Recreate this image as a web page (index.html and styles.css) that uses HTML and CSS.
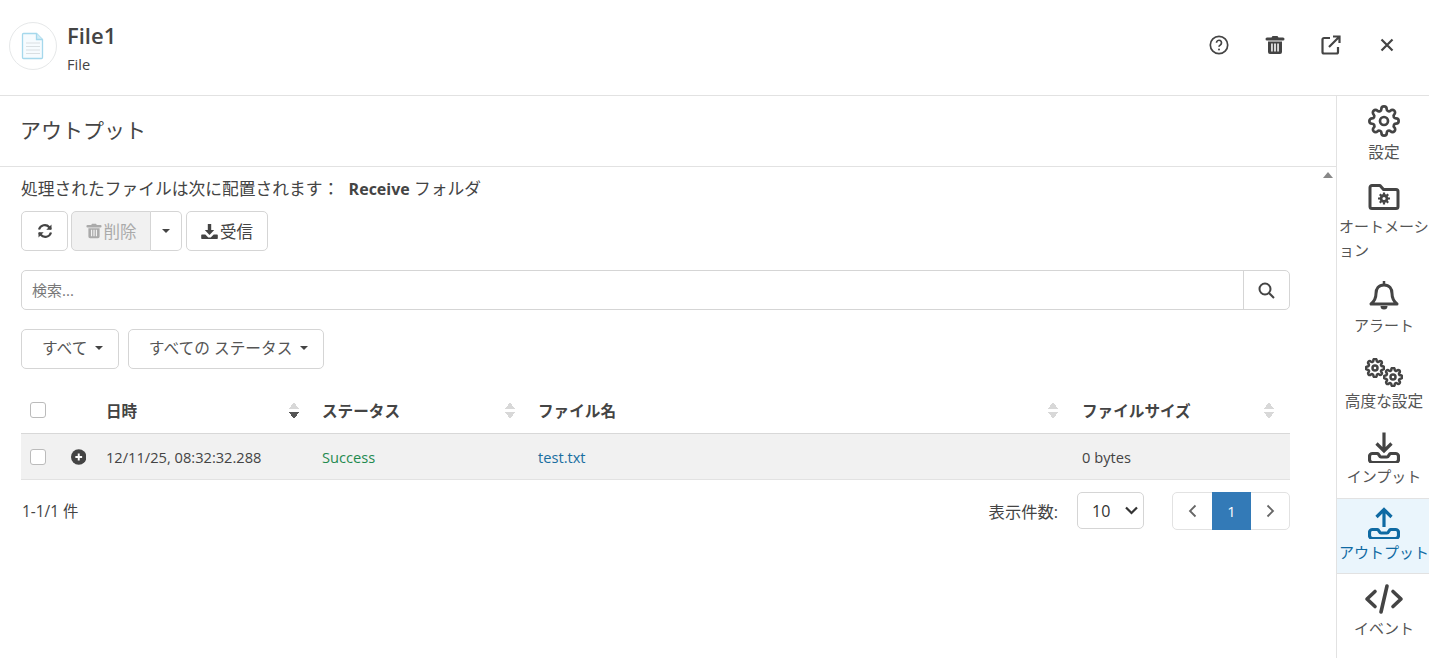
FILE: index.html
```html
<!DOCTYPE html>
<html lang="ja">
<head>
  <meta charset="UTF-8" />
  <title>File1</title>
  <link rel="stylesheet" href="styles.css">
</head>
<body>
<svg class="sprite" xmlns="http://www.w3.org/2000/svg">
  <symbol id="i-gear" viewBox="0 0 24 24">
    <circle cx="12" cy="12" r="3"/>
    <path d="M19.4 15a1.65 1.65 0 0 0 .33 1.82l.06.06a2 2 0 0 1 0 2.83 2 2 0 0 1-2.83 0l-.06-.06a1.65 1.65 0 0 0-1.82-.33 1.65 1.65 0 0 0-1 1.51V21a2 2 0 0 1-2 2 2 2 0 0 1-2-2v-.09A1.65 1.65 0 0 0 9 19.4a1.65 1.65 0 0 0-1.82.33l-.06.06a2 2 0 0 1-2.83 0 2 2 0 0 1 0-2.83l.06-.06a1.65 1.65 0 0 0 .33-1.82 1.65 1.65 0 0 0-1.51-1H3a2 2 0 0 1-2-2 2 2 0 0 1 2-2h.09A1.65 1.65 0 0 0 4.6 9a1.65 1.65 0 0 0-.33-1.82l-.06-.06a2 2 0 0 1 0-2.83 2 2 0 0 1 2.83 0l.06.06a1.65 1.65 0 0 0 1.82.33H9a1.65 1.65 0 0 0 1-1.51V3a2 2 0 0 1 2-2 2 2 0 0 1 2 2v.09a1.65 1.65 0 0 0 1 1.51 1.65 1.65 0 0 0 1.82-.33l.06-.06a2 2 0 0 1 2.83 0 2 2 0 0 1 0 2.83l-.06.06a1.65 1.65 0 0 0-.33 1.82V9a1.65 1.65 0 0 0 1.51 1H21a2 2 0 0 1 2 2 2 2 0 0 1-2 2h-.09a1.65 1.65 0 0 0-1.51 1z"/>
  </symbol>
  <symbol id="i-trash" viewBox="0 0 20 20">
    <path fill="currentColor" stroke="none" d="M7.5 1h5l1 1.5H18a1 1 0 0 1 0 3H2a1 1 0 0 1 0-3h4.500zM3 6.500h14V17a2 2 0 0 1-2 2H5a2 2 0 0 1-2-2zm3.200 2v8h1.500v-8zm3 0v8h1.600v-8zm3.100 0v8h1.500v-8z" fill-rule="evenodd"/>
  </symbol>
  <symbol id="i-tray" viewBox="0 0 32 32">
    <path d="M9.500 22.500H4.500A3 3 0 0 0 1.500 25.500v3A3 3 0 0 0 4.500 31.500h23a3 3 0 0 0 3-3v-3a3 3 0 0 0-3-3h-5c-1.500 0-1.500 3.500-3.500 3.500h-6c-2 0-2-3.500-3.500-3.500z" stroke-linejoin="round"/>
  </symbol>
</svg>

<header class="topbar">
  <div class="file-logo">
    <svg width="26" height="28" viewBox="0 0 26 28" fill="none">
      <path d="M3.500 1.500h13l6 6v18a1 1 0 0 1-1 1h-18a1 1 0 0 1-1-1v-23a1 1 0 0 1 1-1z" fill="#f6fbfe" stroke="#a5d8ec" stroke-width="1.300"/>
      <path d="M16.500 1.500v6h6" fill="#d3ecf6" stroke="#a5d8ec" stroke-width="1.300"/>
      <path d="M6 11h14M6 14.500h14M6 18h14M6 21.500h14" stroke="#d9dfe2" stroke-width="1.200"/>
    </svg>
  </div>
  <div class="file-title">
    <div class="file-name">File1</div>
    <div class="file-type">File</div>
  </div>
  <div class="top-actions">
    <svg class="top-icon" width="20" height="20" viewBox="0 0 20 20" fill="none" stroke="currentColor">
      <circle cx="10" cy="10" r="8.700" stroke-width="1.700"/>
      <path d="M7.500 7.800a2.500 2.500 0 1 1 3.800 2.100c-.9.500-1.300 1-1.300 1.900" stroke-width="1.700"/>
      <circle cx="10" cy="14.500" r="1" fill="currentColor" stroke="none"/>
    </svg>
    <svg class="top-icon" width="20" height="20"><use href="#i-trash"/></svg>
    <svg class="top-icon" width="20" height="20" viewBox="0 0 20 20" fill="none" stroke="currentColor" stroke-width="2.200">
      <path d="M9 3H3a1.500 1.500 0 0 0-1.500 1.500V17A1.500 1.500 0 0 0 3 18.500h12.500A1.500 1.500 0 0 0 17 17v-5"/>
      <path d="M8 12L18 2M12 1.500h6.500V8"/>
    </svg>
    <svg class="top-icon" width="20" height="20" viewBox="0 0 20 20" fill="none" stroke="currentColor" stroke-width="2.200">
      <path d="M4.500 4.500l11 11M15.500 4.500l-11 11"/>
    </svg>
  </div>
</header>

<div class="layout">
  <main class="main">
    <h1 class="page-title">アウトプット</h1>
    <div class="scroll-up"></div>
    <div class="content">
      <p class="location">処理されたファイルは次に配置されます： <b>Receive</b> フォルダ</p>

      <div class="toolbar">
        <button class="btn btn-refresh">
          <svg width="16" height="16" viewBox="0 0 16 16" fill="none" stroke="currentColor" stroke-width="2.200">
            <path d="M2 6.500a6 6 0 0 1 10.300-2.300L14 6M14 9.500a6 6 0 0 1-10.300 2.300L2 10"/>
            <path d="M14.500 1.500v5.200H9.300M1.500 14.500V9.300h5.200" stroke="none" fill="currentColor"/>
          </svg>
        </button>
        <div class="btn-group">
          <button class="btn btn-delete">
            <svg width="16" height="16"><use href="#i-trash"/></svg>削除
          </button>
          <button class="btn btn-split"><span class="caret"></span></button>
        </div>
        <button class="btn btn-receive">
          <svg width="17" height="16" viewBox="0 0 17 16" fill="currentColor">
            <path d="M6.800 1h3.400v6h3l-4.700 5-4.700-5h3z"/>
            <path d="M1 11.500h3.300l3 3h2.400l3-3H16a.8.800 0 0 1 .8.800v2.900a.8.800 0 0 1-.8.800H1a.8.800 0 0 1-.8-.8v-2.900a.8.800 0 0 1 .8-.8z"/>
          </svg>受信
        </button>
      </div>

      <div class="search">
        <input class="search-input" type="text" placeholder="検索...">
        <button class="search-btn">
          <svg width="17" height="17" viewBox="0 0 17 17" fill="none" stroke="currentColor" stroke-width="2">
            <circle cx="7" cy="7" r="5.500"/><path d="M11 11l5 5"/>
          </svg>
        </button>
      </div>

      <div class="filters">
        <button class="btn btn-filter">すべて<span class="caret"></span></button>
        <button class="btn btn-filter">すべての ステータス<span class="caret"></span></button>
      </div>

      <table class="grid">
        <colgroup>
          <col class="c-check"><col class="c-date"><col class="c-status"><col class="c-name"><col class="c-size">
        </colgroup>
        <thead>
          <tr>
            <th><span class="check"></span></th>
            <th><div class="th-in">日時<span class="sort sort-desc"></span></div></th>
            <th><div class="th-in">ステータス<span class="sort"></span></div></th>
            <th><div class="th-in">ファイル名<span class="sort"></span></div></th>
            <th><div class="th-in">ファイルサイズ<span class="sort"></span></div></th>
          </tr>
        </thead>
        <tbody>
          <tr>
            <td>
              <div class="row-tools">
                <span class="check"></span>
                <svg width="16" height="16" viewBox="0 0 16 16">
                  <circle cx="8" cy="8" r="8" fill="#444"/>
                  <path d="M8 4.500v7M4.500 8h7" stroke="#fff" stroke-width="2"/>
                </svg>
              </div>
            </td>
            <td>12/11/25, 08:32:32.288</td>
            <td class="ok">Success</td>
            <td><a class="file-link" href="#">test.txt</a></td>
            <td>0 bytes</td>
          </tr>
        </tbody>
      </table>

      <div class="pager-row">
        <span class="count">1-1/1 件</span>
        <div class="pager-right">
          <span class="per-page">表示件数:</span>
          <div class="select">10
            <svg width="13" height="9" viewBox="0 0 13 9" fill="none" stroke="currentColor" stroke-width="2.200"><path d="M1 1.500L6.500 7 12 1.500"/></svg>
          </div>
          <div class="pager">
            <span class="page">
              <svg width="9" height="14" viewBox="0 0 9 14" fill="none" stroke="currentColor" stroke-width="1.800"><path d="M7.500 1.500L2 7l5.500 5.500"/></svg>
            </span>
            <span class="page page-on">1</span>
            <span class="page page-last">
              <svg width="9" height="14" viewBox="0 0 9 14" fill="none" stroke="currentColor" stroke-width="1.800"><path d="M1.500 1.500L7 7l-5.500 5.500"/></svg>
            </span>
          </div>
        </div>
      </div>
    </div>
  </main>

  <nav class="side">
    <a class="side-item side-first">
      <svg width="32" height="32" fill="none" stroke="currentColor" stroke-width="2"><use href="#i-gear"/></svg>
      <span class="side-kanji">設定</span>
    </a>
    <a class="side-item">
      <svg width="32" height="32" viewBox="0 0 32 32" fill="none" stroke="currentColor" stroke-width="3">
        <path d="M2 6.500a2 2 0 0 1 2-2h8l3.500 4H28a2 2 0 0 1 2 2v15a2 2 0 0 1-2 2H4a2 2 0 0 1-2-2z" stroke-linejoin="round"/>
        <circle cx="16" cy="17.500" r="3" stroke-width="2.800"/>
        <path d="M16 11.500v12M10 17.500h12M11.800 13.300l8.400 8.400M20.200 13.300l-8.400 8.400" stroke-width="2.200" stroke-dasharray="2.200 7.600"/>
      </svg>
      <span>オートメーション</span>
    </a>
    <a class="side-item">
      <svg width="32" height="32" viewBox="0 0 32 32" fill="none" stroke="currentColor" stroke-width="3">
        <path d="M16 5c-5.500 0-8 4-8 8.500 0 5.500-2 8-5 10.500h26c-3-2.500-5-5-5-10.500C24 9 21.500 5 16 5z" stroke-linejoin="round"/>
        <path d="M16 1v4" stroke-width="2.500"/>
        <path d="M12.500 26h7a3.500 3.500 0 0 1-7 0z" fill="currentColor" stroke="none"/>
      </svg>
      <span>アラート</span>
    </a>
    <a class="side-item">
      <svg width="38" height="32" viewBox="0 0 38 32" fill="none" stroke="currentColor">
        <svg x="0" y="2" width="20" height="20" viewBox="0 0 24 24" stroke-width="3"><use href="#i-gear"/></svg>
        <svg x="18" y="11" width="20" height="20" viewBox="0 0 24 24" stroke-width="3"><use href="#i-gear"/></svg>
      </svg>
      <span class="side-kanji">高度な設定</span>
    </a>
    <a class="side-item">
      <svg width="32" height="32" viewBox="0 0 32 32" fill="none" stroke="currentColor" stroke-width="3.200">
        <path d="M16 1.500v18M8.500 12.500L16 20l7.500-7.500"/>
        <use href="#i-tray"/>
      </svg>
      <span>インプット</span>
    </a>
    <a class="side-item side-on">
      <svg width="32" height="32" viewBox="0 0 32 32" fill="none" stroke="currentColor" stroke-width="3.200">
        <path d="M16 20V3M8.500 10L16 2.500l7.500 7.500"/>
        <use href="#i-tray"/>
      </svg>
      <span>アウトプット</span>
    </a>
    <a class="side-item">
      <svg width="40" height="32" viewBox="0 0 40 32" fill="none" stroke="currentColor" stroke-width="3.600">
        <path d="M11 8.500L3 16l8 7.500M29 8.500l8 7.500-8 7.500M23 3l-6 26" stroke-linecap="round" stroke-linejoin="round"/>
      </svg>
      <span>イベント</span>
    </a>
  </nav>
</div>
</body>
</html>
```

FILE: styles.css
```css
html, body {
  margin: 0;
  padding: 0;
  background: #fff;
  color: #444;
  font-family: "Open Sans", "Noto Sans CJK JP", sans-serif;
  font-size: 14.65px;
  overflow: hidden;
}

.sprite {
  display: none;
}

.topbar {
  height: 95px;
  border-bottom: 1px solid #e2e2e2;
  display: flex;
  align-items: flex-start;
  padding-left: 9px;
}

.file-logo {
  width: 46px;
  height: 46px;
  margin-top: 22px;
  border: 1px solid #e6e8e9;
  border-radius: 50%;
  display: flex;
  align-items: center;
  justify-content: center;
}

.file-title {
  margin-left: 10px;
  margin-top: 20px;
}

.file-name {
  font-size: 22px;
  font-weight: 600;
  line-height: 30px;
}

.file-type {
  font-size: 14.65px;
  line-height: 20px;
  margin-top: 4px;
}

.top-actions {
  margin-left: auto;
  margin-top: 35px;
  display: flex;
  gap: 36px;
  padding-right: 32.5px;
}

.top-icon {
  display: block;
}

.layout {
  display: flex;
  height: 562px;
}

.main {
  flex: 1;
  position: relative;
  min-width: 0;
}

.page-title {
  margin: 0;
  height: 70px;
  line-height: 68px;
  padding-left: 20px;
  font-size: 21px;
  font-weight: 400;
  border-bottom: 1px solid #e2e2e2;
}

.scroll-up {
  position: absolute;
  top: 76px;
  right: 3px;
  border-left: 5px solid transparent;
  border-right: 5px solid transparent;
  border-bottom: 6px solid #888;
}

.content {
  padding: 0 46px 0 21px;
}

.location {
  margin: 0;
  height: 44px;
  line-height: 44px;
  font-size: 16.75px;
  white-space: pre-wrap;
}

.location b {
  font-weight: 700;
  margin-left: 5px;
  font-size: 16px;
}

.toolbar {
  display: flex;
  gap: 3px;
}

.btn {
  height: 40px;
  padding: 0;
  background: #fff;
  border: 1px solid #d5d5d5;
  border-radius: 5px;
  color: #444;
  font: inherit;
  font-size: 16.5px;
  display: flex;
  align-items: center;
  justify-content: center;
}

.btn-refresh {
  width: 47px;
}

.btn-group {
  display: flex;
}

.btn-delete {
  width: 80px;
  background: #f1f1f1;
  color: #aaa;
  border-radius: 5px 0 0 5px;
  gap: 2px;
}

.btn-split {
  width: 31px;
  border-left: 0;
  border-radius: 0 5px 5px 0;
}

.btn-receive {
  width: 82px;
  margin-left: 1px;
  gap: 2px;
}

.caret {
  display: inline-block;
  border-left: 4px solid transparent;
  border-right: 4px solid transparent;
  border-top: 4px solid #444;
}

.search {
  margin-top: 19px;
  height: 40px;
  display: flex;
  border: 1px solid #d5d5d5;
  border-radius: 5px;
  box-sizing: border-box;
}

.search-input {
  flex: 1;
  border: 0;
  outline: 0;
  padding: 0 10px;
  background: none;
  font: inherit;
  font-size: 15px;
  color: #444;
}

.search-input::placeholder {
  color: #777;
  opacity: 1;
}

.search-btn {
  width: 46px;
  border: 0;
  border-left: 1px solid #d5d5d5;
  background: none;
  color: #444;
  padding: 0;
  display: flex;
  align-items: center;
  justify-content: center;
}

.filters {
  margin-top: 19px;
  display: flex;
  gap: 9px;
}

.btn-filter {
  padding: 0 15px 3px 20px;
  font-size: 15.7px;
  gap: 7.5px;
  color: #555;
}

.grid {
  margin-top: 21px;
  width: 100%;
  border-collapse: collapse;
  table-layout: fixed;
}

.c-check { width: 75px; }
.c-date { width: 216px; }
.c-status { width: 216px; }
.c-name { width: 544px; }

.grid th {
  height: 43px;
  padding: 0 10px 2px;
  box-sizing: border-box;
  text-align: left;
  font-weight: 700;
  font-size: 15.6px;
  border-bottom: 1px solid #d8d8d8;
}

.grid td {
  height: 46px;
  box-sizing: border-box;
  padding: 2px 10px 0;
  background: #f1f1f1;
  border-bottom: 1px solid #e2e2e2;
}

.th-in {
  display: flex;
  align-items: center;
  justify-content: space-between;
}

.check {
  display: block;
  width: 14px;
  height: 14px;
  background: #fff;
  border: 1px solid #bbb;
  border-radius: 3px;
  margin-left: -1px;
}

.row-tools {
  display: flex;
  align-items: center;
  gap: 25px;
}

.sort {
  display: block;
  width: 10px;
  height: 20px;
  margin-right: 3px;
  background:
    linear-gradient(to bottom right, transparent 50%, #d8d8d8 50%) 0 2px / 5px 7px no-repeat,
    linear-gradient(to bottom left, transparent 50%, #d8d8d8 50%) 5px 2px / 5px 7px no-repeat,
    linear-gradient(to top right, transparent 50%, #d8d8d8 50%) 0 12px / 5px 7px no-repeat,
    linear-gradient(to top left, transparent 50%, #d8d8d8 50%) 5px 12px / 5px 7px no-repeat;
}

th:nth-child(4) .sort { margin-right: 4px; }
th:nth-child(5) .sort { margin-right: 6px; }

.sort-desc {
  background:
    linear-gradient(to bottom right, transparent 50%, #d8d8d8 50%) 0 2px / 5px 7px no-repeat,
    linear-gradient(to bottom left, transparent 50%, #d8d8d8 50%) 5px 2px / 5px 7px no-repeat,
    linear-gradient(to top right, transparent 50%, #555 50%) 0 12px / 5px 7px no-repeat,
    linear-gradient(to top left, transparent 50%, #555 50%) 5px 12px / 5px 7px no-repeat;
}

.ok {
  color: #1f8a4f;
}

.file-link {
  color: #1a6ea0;
  text-decoration: none;
}

.pager-row {
  margin-top: 12px;
  display: flex;
  align-items: center;
  justify-content: space-between;
  padding-left: 1px;
}

.count {
  font-size: 15.4px;
}

.pager-right {
  display: flex;
  align-items: center;
}

.per-page {
  margin-right: 19px;
  font-size: 16.3px;
}

.select {
  width: 67px;
  height: 37px;
  box-sizing: border-box;
  border: 1px solid #d5d5d5;
  border-radius: 5px;
  padding: 0 5px 0 14px;
  display: flex;
  align-items: center;
  justify-content: space-between;
  font-size: 16px;
  margin-right: 28px;
  color: #333;
}

.pager {
  display: flex;
  height: 38px;
  box-sizing: border-box;
  border: 1px solid #e2e2e2;
  border-radius: 5px;
}

.page {
  width: 39px;
  display: flex;
  align-items: center;
  justify-content: center;
  color: #666;
}

.page-last {
  width: 38px;
}

.page-on {
  background: #337ab7;
  color: #fff;
  margin: -1px 0;
}

.side {
  width: 92px;
  border-left: 1px solid #e2e2e2;
  flex-shrink: 0;
}

.side-item {
  display: flex;
  flex-direction: column;
  align-items: center;
  padding: 9px 0 9.6px 2px;
  color: #444;
  font-size: 15px;
  line-height: 24px;
}

.side-item svg {
  display: block;
  flex-shrink: 0;
}

.side-item span {
  margin-top: 1px;
  color: #555;
}

.side-first {
  padding-bottom: 7.6px;
}

.side-item.side-first span {
  margin-top: 3px;
}

.side-item .side-kanji {
  font-size: 15.7px;
}

.side-on {
  background: #eaf5fc;
  color: #0f6aa3;
  box-shadow: inset 0 1px 0 #e2e2e2, inset 0 -1px 0 #e2e2e2;
}

.side-item.side-on span {
  color: #0f6aa3;
}
```
